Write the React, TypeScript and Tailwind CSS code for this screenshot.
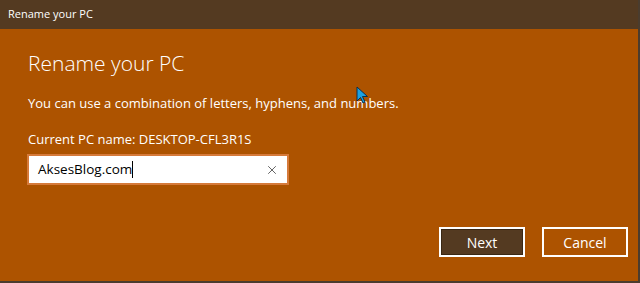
import { X } from "lucide-react";

export default function App() {
  return (
    <div
      className="relative w-[640px] h-[283px] flex flex-col bg-[#ad5300] border-r-2 border-b-2 border-[#4a3c2e] overflow-hidden"
      style={{ fontFamily: '"Open Sans", "Noto Sans", sans-serif' }}
    >
      {/* Title bar */}
      <div className="h-[29px] shrink-0 bg-[#543a21] flex items-center pl-2 text-[11px] text-white">
        Rename your PC
      </div>

      {/* Content */}
      <div className="flex-1 flex flex-col pl-[28px] pr-[10px] text-white">
        <h1 className="mt-[21px] text-[21px] font-light leading-[27px]">Rename your PC</h1>
        <p className="mt-[17px] text-[13px] leading-[18px]">
          You can use a combination of letters, hyphens, and numbers.
        </p>
        <p className="mt-[18px] text-[13px] leading-[18px]">Current PC name: DESKTOP-CFL3R1S</p>

        <div className="mt-[6px] -ml-px w-[262px] h-[31px] border-2 border-[#d67a3a] bg-white flex items-center pl-[9px] pr-[8px]">
          <span className="text-[13.5px] text-black">AksesBlog.com</span>
          <span className="w-px h-[17px] bg-black" />
          <span className="flex-1" />
          <X size={14} strokeWidth={1.3} className="text-[#333]" />
        </div>

        <div className="flex-1" />

        <div className="flex justify-end gap-[17px] mb-[24px]">
          <button className="w-[86px] h-[30px] border-2 border-white bg-[#543a21] outline outline-1 outline-[#3a2814] -outline-offset-[3px] text-[14px] text-white">
            Next
          </button>
          <button className="w-[86px] h-[30px] border-2 border-white bg-[#ad5300] text-[14px] text-white">
            Cancel
          </button>
        </div>
      </div>

      {/* Mouse pointer */}
      <svg className="absolute left-[356px] top-[86px]" width="14" height="20" viewBox="0 0 14 20">
        <path d="M1 1 L1 15 L4.5 11.5 L7 17 L9 16 L6.5 10.5 L11.5 10.5 Z" fill="#1ba1e2" stroke="#0b2f4a" strokeWidth="1" strokeLinejoin="round" />
      </svg>
    </div>
  );
}
